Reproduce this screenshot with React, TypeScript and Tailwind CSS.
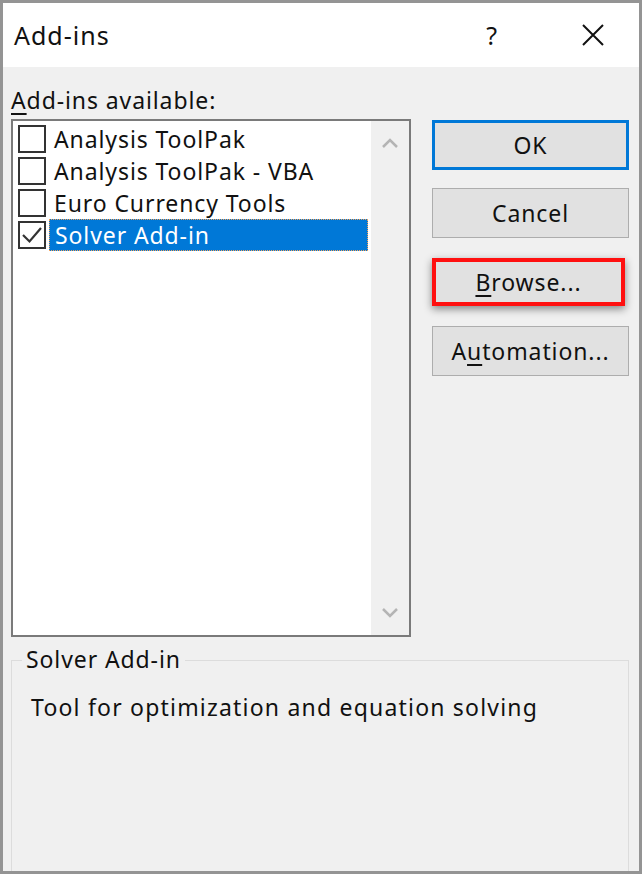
import React from "react";

const items = [
  { name: "Analysis ToolPak", checked: false },
  { name: "Analysis ToolPak - VBA", checked: false },
  { name: "Euro Currency Tools", checked: false },
  { name: "Solver Add-in", checked: true },
];

const font = { fontFamily: '"Noto Sans", "Open Sans", sans-serif' };

const CheckBox = ({ checked }: { checked: boolean }) => (
  <div className="w-[28px] h-[28px] border-2 border-[#333] bg-white flex items-center justify-center shrink-0">
    {checked && (
      <svg width="22" height="22" viewBox="0 0 22 22">
        <path d="M2 11 L8.5 17.5 L20 4" fill="none" stroke="#333" strokeWidth="2.2" />
      </svg>
    )}
  </div>
);

const Chevron = ({ up }: { up?: boolean }) => (
  <svg width="18" height="12" viewBox="0 0 18 12">
    <path
      d={up ? "M2 10 L9 3 L16 10" : "M2 2 L9 9 L16 2"}
      fill="none"
      stroke="#b4b4b4"
      strokeWidth="2.5"
    />
  </svg>
);

const Button = ({ children, className }: { children: React.ReactNode; className?: string }) => (
  <div
    className={`w-[197px] h-[50px] bg-[#e1e1e1] flex items-center justify-center text-[23px] tracking-[0.9px] text-[#111] ${className ?? "border border-[#adadad]"}`}
  >
    {children}
  </div>
);

export default function App() {
  return (
    <div
      className="w-[642px] h-[874px] border-[3px] border-[#949494] bg-[#f0f0f0] flex flex-col overflow-hidden"
      style={font}
    >
      <div className="h-[64px] bg-white flex items-center pl-[11px] pr-[34px] shrink-0">
        <span className="text-[25px] tracking-[1px] text-[#111] flex-1 leading-none">Add-ins</span>
        <span className="text-[25px] text-[#111] mr-[84px] leading-none">?</span>
        <svg width="24" height="24" viewBox="0 0 24 24">
          <path d="M2 2 L22 22 M22 2 L2 22" stroke="#111" strokeWidth="2" />
        </svg>
      </div>
      <div className="flex flex-col flex-1 px-[8px]">
        <div className="flex mt-[18px]">
          <div className="flex flex-col w-[400px]">
            <div className="text-[23px] tracking-[0.9px] text-[#111] leading-[30px]">
              <span className="underline underline-offset-4">A</span>dd-ins available:
            </div>
            <div className="mt-[4px] h-[518px] border-2 border-[#7a7a7a] bg-white flex">
              <div className="flex-1 flex flex-col pt-[2px] pl-[5px]">
                {items.map((it) => (
                  <div key={it.name} className="flex items-center h-[32px]">
                    <CheckBox checked={it.checked} />
                    <div
                      className={`ml-[3px] pl-[5px] h-[32px] flex items-center text-[23px] tracking-[0.9px] whitespace-nowrap ${
                        it.checked
                          ? "bg-[#0078d7] text-white w-[319px] border border-dotted border-[#f3a35c]"
                          : "text-[#111]"
                      }`}
                    >
                      {it.name}
                    </div>
                  </div>
                ))}
              </div>
              <div className="w-[38px] bg-[#f0f0f0] flex flex-col items-center justify-between py-[16px]">
                <Chevron up />
                <Chevron />
              </div>
            </div>
          </div>
          <div className="flex flex-col ml-[21px] mt-[35px] gap-[18px]">
            <Button className="border-[3px] border-[#0078d7]">OK</Button>
            <Button>Cancel</Button>
            <div className="w-[193px] h-[48px] border-[4px] border-[#ff1010] bg-[#e1e1e1] flex items-center justify-center text-[23px] tracking-[0.9px] text-[#111] shadow-[0_3px_8px_rgba(0,0,0,0.45)] my-[2px]">
              <span>
                <span className="underline underline-offset-4">B</span>rowse...
              </span>
            </div>
            <Button>
              <span>
                A<span className="underline underline-offset-4">u</span>tomation...
              </span>
            </Button>
          </div>
        </div>
        <div className="relative mt-[23px] flex-1 border border-[#dcdcdc] border-b-0 mr-[2px]">
          <span className="absolute -top-[17px] left-[10px] bg-[#f0f0f0] px-[4px] text-[23px] tracking-[0.9px] text-[#111] leading-[30px]">
            Solver Add-in
          </span>
          <div className="mt-[29px] ml-[19px] text-[23px] tracking-[1.2px] text-[#111]">
            Tool for optimization and equation solving
          </div>
        </div>
      </div>
    </div>
  );
}
